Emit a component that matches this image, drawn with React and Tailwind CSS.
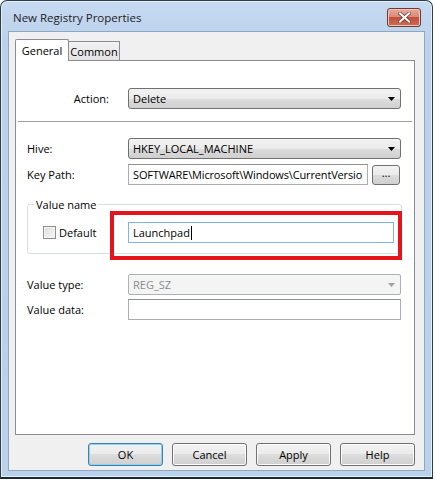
function Arrow({ color = "#000" }) {
  return (
    <svg width="7" height="4" viewBox="0 0 7 4" className="shrink-0">
      <path d="M0 0 H7 L3.5 4 Z" fill={color} />
    </svg>
  );
}

function Combo({ text, disabled }) {
  if (disabled) {
    return (
      <div className="w-[273px] h-[21px] flex items-center justify-between pl-[4px] pr-[5px] rounded-[2px] border border-[#adb2b5] bg-[#f4f4f4] text-[#8b8b8b]">
        <span>{text}</span>
        <Arrow color="#a0a0a0" />
      </div>
    );
  }
  return (
    <div className="w-[273px] h-[21px] flex items-center justify-between pl-[4px] pr-[5px] rounded-[3px] border border-[#707070] bg-[linear-gradient(to_bottom,#f2f2f2_0%,#ebebeb_50%,#dddddd_50%,#cfcfcf_100%)]">
      <span>{text}</span>
      <Arrow />
    </div>
  );
}

function Btn({ children, def }) {
  return (
    <div
      className={
        "w-[75px] h-[23px] flex items-center justify-center rounded-[3px] border bg-[linear-gradient(to_bottom,#f2f2f2_0%,#ebebeb_50%,#dddddd_50%,#cfcfcf_100%)] " +
        (def ? "border-[#3c7fb1] shadow-[inset_0_0_0_1px_#8fd3f3]" : "border-[#707070] shadow-[inset_0_0_0_1px_#fcfcfc]")
      }
    >
      {children}
    </div>
  );
}

export default function App() {
  return (
    <div className="w-[435px] h-[484px] bg-white font-['Segoe_UI','Open_Sans',sans-serif] text-[11px] leading-[15px] text-black">
      <div className="w-[433px] h-[479px] flex flex-col rounded-t-[7px] border border-[#2f3d48] border-b-2 border-b-[#1b2a33] bg-[linear-gradient(to_bottom,#c6daf1_0px,#bcd2eb_40px,#b9d1ea_100%)] shadow-[inset_0_0_0_1px_#e4eef9]">
        <div className="h-[30px] flex items-center justify-between pl-[12px] pr-[11px]">
          <span className="text-[11.5px] text-[#1e1e1e] pt-[2px]">New Registry Properties</span>
          <div className="w-[34px] h-[19px] mt-[2px] flex items-center justify-center rounded-[3px] border border-[#6e3a33] bg-[linear-gradient(to_bottom,#e9a99b_0%,#d98a79_45%,#c4503b_50%,#cf6b55_100%)] shadow-[inset_0_0_0_1px_#f0c5bb]">
            <svg width="13" height="11" viewBox="0 0 13 11">
              <path d="M2 1.5 L11 9.5 M11 1.5 L2 9.5" stroke="#5a2a22" strokeWidth="3.4" strokeLinecap="square" />
              <path d="M2 1.5 L11 9.5 M11 1.5 L2 9.5" stroke="#ffffff" strokeWidth="2.2" strokeLinecap="square" />
            </svg>
          </div>
        </div>
        <div className="mx-[7px] h-[440px] bg-[#f0f0f0] border border-[#8fa7c1] flex flex-col pt-[6px] pl-[6px]">
          <div className="flex items-end h-[22px]">
            <div className="relative z-10 w-[54px] h-[22px] mb-[-1px] bg-white border border-b-0 border-[#898c95] rounded-t-[2px] flex items-start justify-center pt-[3px]">
              General
            </div>
            <div className="w-[51px] h-[19px] border border-b-0 border-l-0 border-[#898c95] bg-[linear-gradient(to_bottom,#f2f2f2,#e3e3e3)] flex items-center justify-center pt-[1px]">
              Common
            </div>
          </div>
          <div className="relative w-[400px] h-[375px] bg-white border border-[#898c95] flex flex-col">
            <div className="flex items-center mt-[27px]">
              <div className="w-[112px] pr-[19px] text-right">Action:</div>
              <Combo text="Delete" />
            </div>
            <div className="mx-[2px] mt-[12px] h-[1px] bg-[#a0a0a0]" />
            <div className="flex items-center mt-[16px]">
              <div className="w-[112px] pl-[11px]">Hive:</div>
              <Combo text="HKEY_LOCAL_MACHINE" />
            </div>
            <div className="flex items-center mt-[5px]">
              <div className="w-[112px] pl-[11px]">Key Path:</div>
              <div className="w-[240px] h-[21px] flex items-center pl-[4px] border border-[#abadb3] border-t-[#8e8f8f] bg-white overflow-hidden whitespace-nowrap tracking-[-0.15px]">
                SOFTWARE\Microsoft\Windows\CurrentVersio
              </div>
              <div className="ml-[4px] w-[28px] h-[20px] flex items-center justify-center pb-[4px] rounded-[3px] border border-[#707070] bg-[linear-gradient(to_bottom,#f2f2f2_0%,#ebebeb_50%,#dddddd_50%,#cfcfcf_100%)] leading-none">
                ...
              </div>
            </div>
            <fieldset className="ml-[11px] mt-[12px] w-[375px] h-[57px] border border-[#d5dfe5] rounded-[3px] px-0">
              <legend className="ml-[6px] px-[2px]">Value name</legend>
              <div className="flex items-center mt-[10px]">
                <div className="w-[100px] flex items-center">
                  <div className="ml-[15px] w-[13px] h-[13px] border border-[#8e8f8f] bg-[linear-gradient(135deg,#dcdcdc,#fafafa)] shadow-[inset_0_0_0_1px_#f4f4f4]" />
                  <span className="ml-[3px]">Default</span>
                </div>
                <div className="w-[266px] h-[21px] flex items-center pl-[4px] border border-[#7eb4ea] bg-white">
                  Launchpad
                  <span className="inline-block w-[1px] h-[14px] bg-black ml-[1px]" />
                </div>
              </div>
            </fieldset>
            <div className="flex items-center mt-[20px]">
              <div className="w-[112px] pl-[11px]">Value type:</div>
              <Combo text="REG_SZ" disabled />
            </div>
            <div className="flex items-center mt-[4px]">
              <div className="w-[112px] pl-[11px]">Value data:</div>
              <div className="w-[273px] h-[21px] border border-[#abadb3] border-t-[#8e8f8f] bg-white" />
            </div>
            <div className="absolute left-[94px] top-[150px] w-[292px] h-[49px] border-4 border-[#e3141b]" />
          </div>
          <div className="flex justify-end gap-[9px] mt-[8px] pr-[9px]">
            <Btn def>OK</Btn>
            <Btn>Cancel</Btn>
            <Btn>Apply</Btn>
            <Btn>Help</Btn>
          </div>
        </div>
      </div>
    </div>
  );
}
